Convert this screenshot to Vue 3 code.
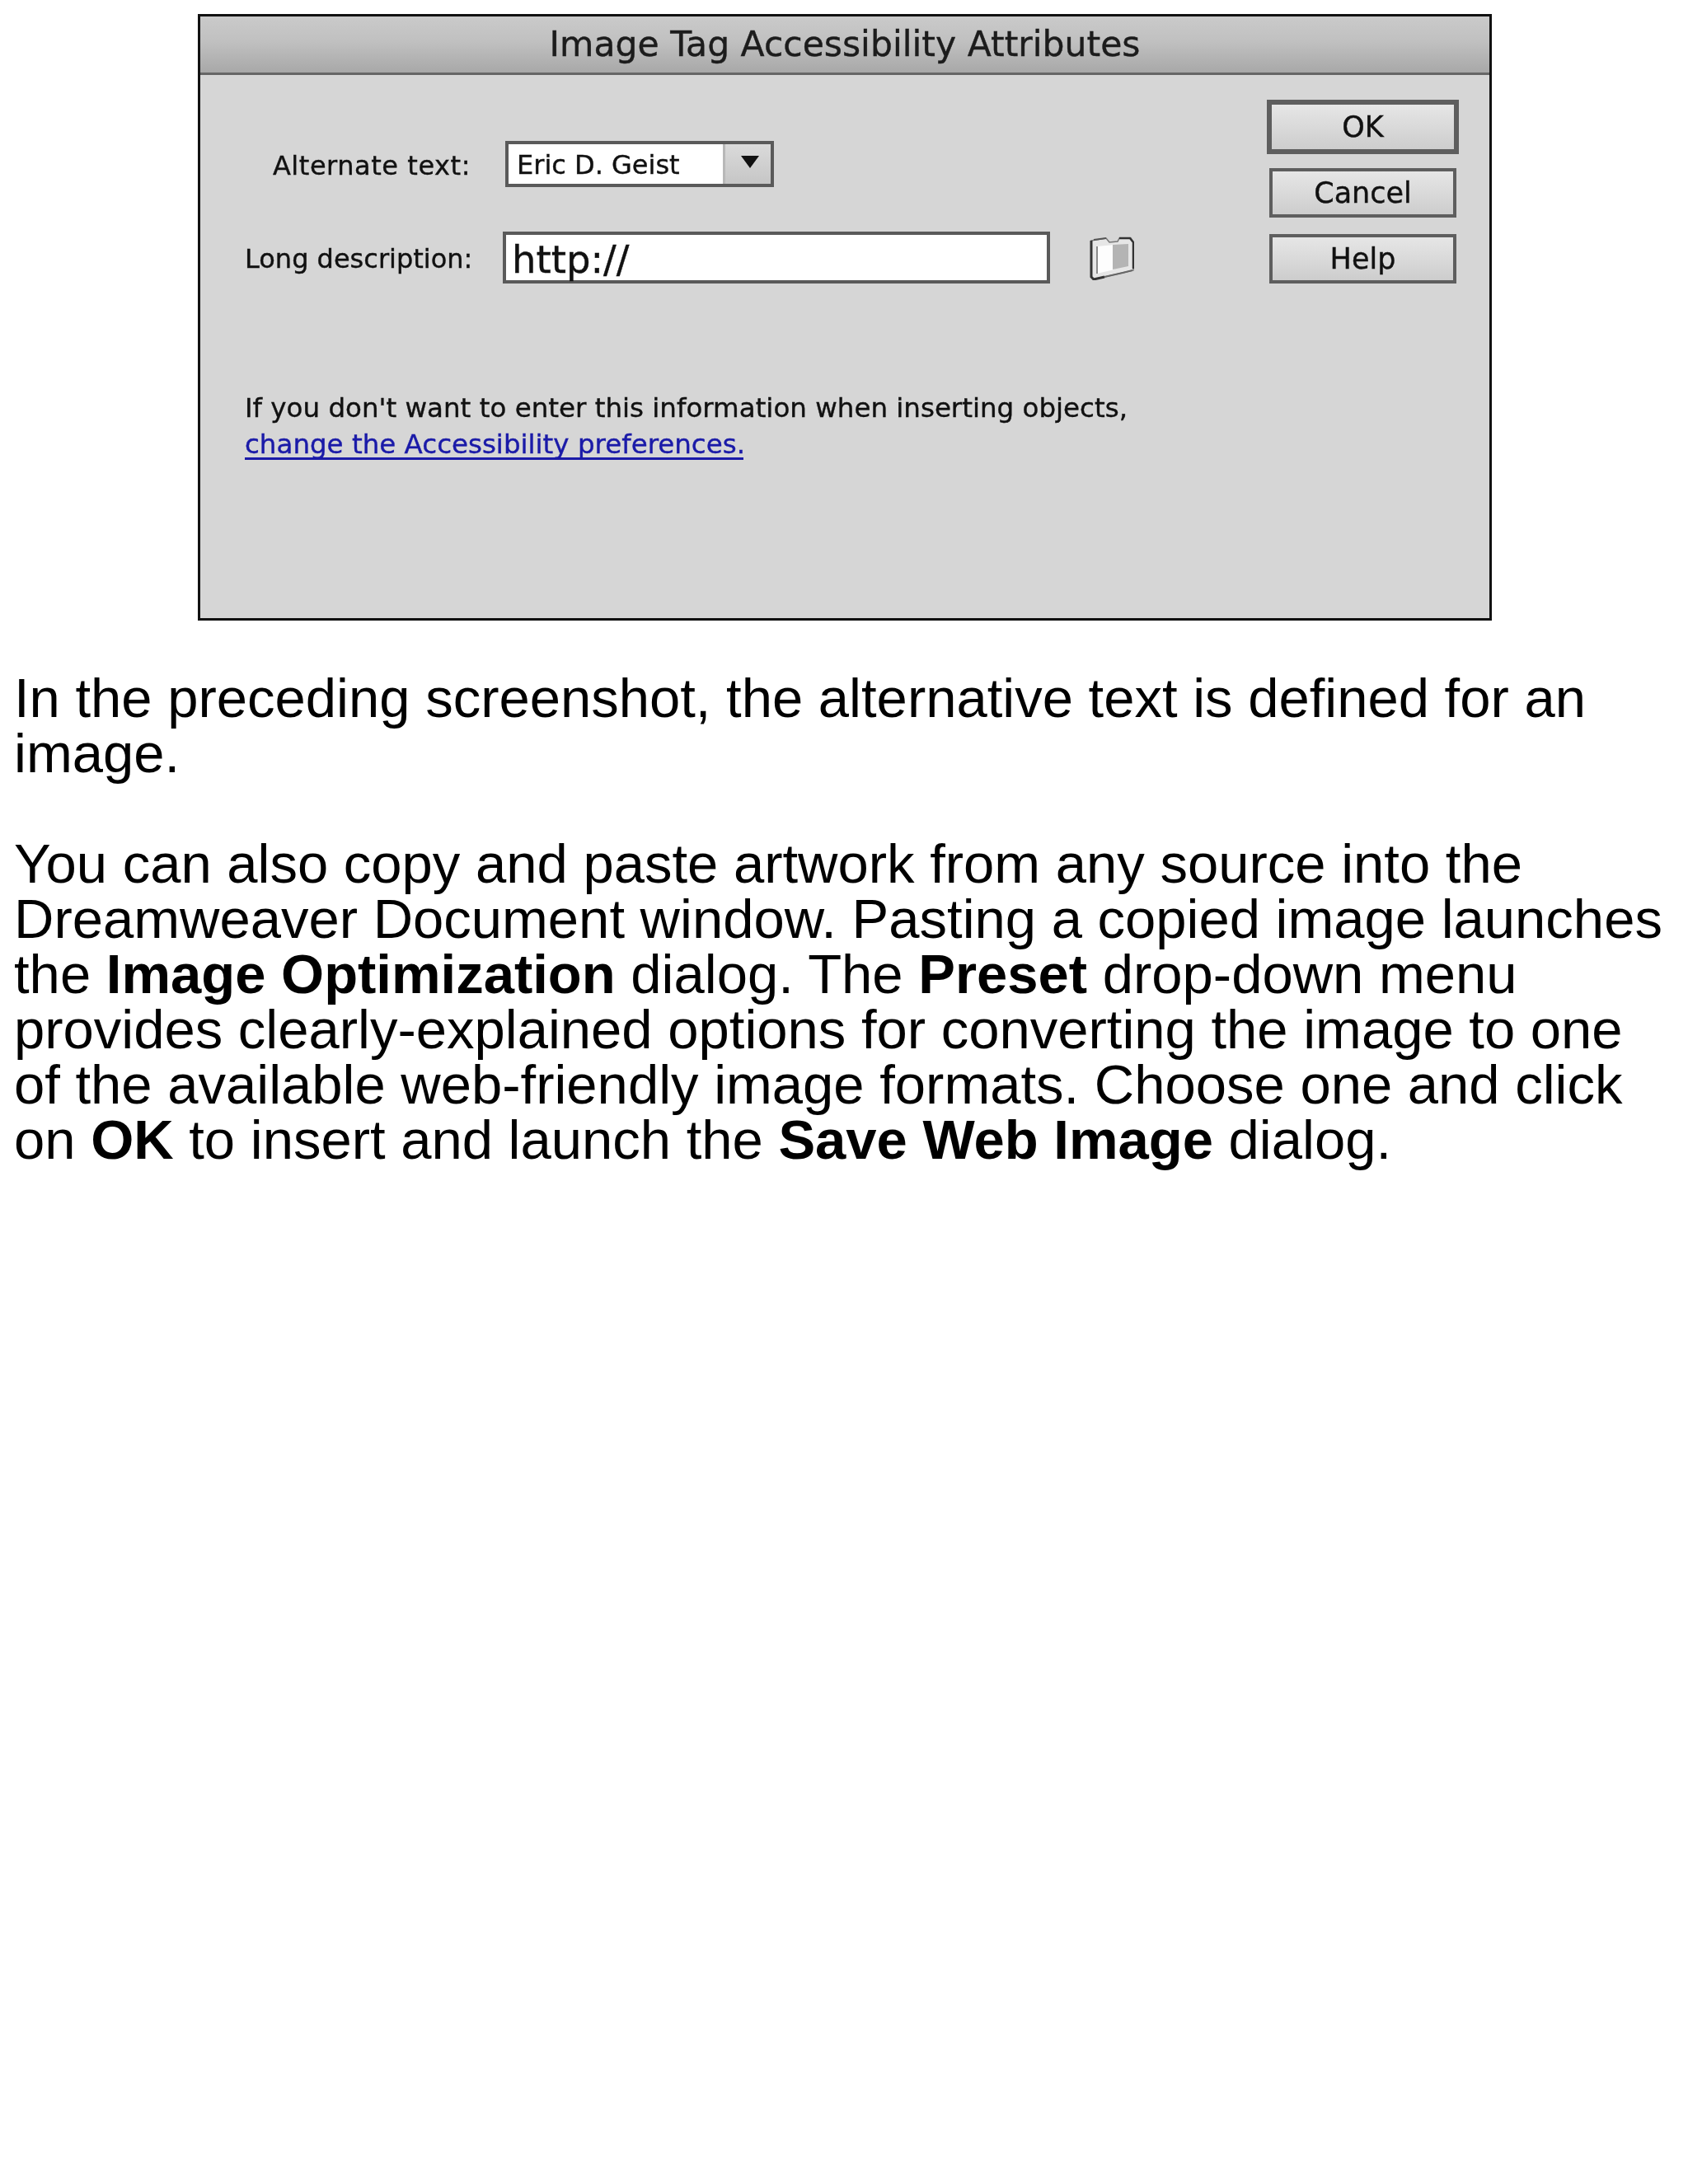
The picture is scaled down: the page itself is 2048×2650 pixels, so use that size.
<template>
  <div class="page">
    <div class="dialog">
      <div class="title-bar">Image Tag Accessibility Attributes</div>
      <div class="dialog-body">
        <div class="fields">
          <div class="field-row alt-row">
            <label class="field-label alt-label">Alternate text:</label>
            <div class="select-box">
              <span class="select-value">Eric D. Geist</span>
              <span class="select-arrow"><i class="triangle"></i></span>
            </div>
          </div>
          <div class="field-row desc-row">
            <label class="field-label">Long description:</label>
            <div class="url-input">http://</div>
            <svg class="folder" viewBox="0 0 54 54" width="54" height="54">
              <path d="M2 6 L20 3 L24 8 L34 7 L36 3 L50 3 L53 8 L53 42 L40 45 L5 53 L2 50 Z" fill="#e6e6e6" stroke="#777" stroke-width="1.5" />
              <path d="M9 13 L30 11 L30 41 L9 46 Z" fill="#fdfdfd" />
              <path d="M28 11 L47 10 L47 37 L28 41 Z" fill="#b4b4b4" />
              <path d="M2 6 L2 50 L5 53 L18 50" fill="none" stroke="#333" stroke-width="3" />
              <path d="M5 5 L20 3" fill="none" stroke="#555" stroke-width="2" />
              <path d="M36 3 L49 3 L53 8 L53 40" fill="none" stroke="#333" stroke-width="2.5" />
              <path d="M18 50 L40 45 L52 42" fill="none" stroke="#666" stroke-width="2" />
              <path d="M9 13 L9 46" fill="none" stroke="#8a8a8a" stroke-width="2" />
            </svg>
          </div>
          <div class="note">
            <div>If you don't want to enter this information when inserting objects,</div>
            <a class="note-link" href="#" @click.prevent>change the Accessibility preferences.</a>
          </div>
        </div>
        <div class="buttons">
          <button class="btn btn-default" type="button">OK</button>
          <button class="btn btn-cancel" type="button">Cancel</button>
          <button class="btn btn-help" type="button">Help</button>
        </div>
      </div>
    </div>

    <p class="para">In the preceding screenshot, the alternative text is defined for an image.</p>
    <p class="para">
      You can also copy and paste artwork from any source into the Dreamweaver Document window. Pasting a copied image launches
      the <b>Image Optimization</b> dialog. The <b>Preset</b> drop-down menu provides clearly-explained options for converting the image to one
      of the available web-friendly image formats. Choose one and click on <b>OK</b> to insert and launch the <b>Save Web Image</b> dialog.
    </p>
  </div>
</template>

<script setup>
</script>

<style>
html, body { background: #fff; }
</style>

<style scoped>
.page {
  box-sizing: border-box;
  width: 2048px;
  min-height: 2650px;
  padding: 17px 17px 0;
  background: #fff;
  font-family: "Liberation Sans", Arial, sans-serif;
  color: #000;
}

/* ダイアログ部分 */
.dialog {
  box-sizing: border-box;
  width: 1570px;
  height: 736px;
  margin-left: 223px;
  border: 3px solid #111;
  background: #d6d6d6;
  font-family: "DejaVu Sans", sans-serif;
  color: #111;
  -webkit-text-stroke: 0.4px currentColor;
  filter: blur(0.7px);
}
.title-bar {
  box-sizing: border-box;
  height: 71px;
  padding-top: 3px;
  border-bottom: 3px solid #666;
  background: linear-gradient(#cacaca, #c0c0c0 45%, #a8a8a8);
  text-align: center;
  font-size: 42.5px;
  line-height: 62px;
  white-space: nowrap;
  color: #1c1c1c;
}
.dialog-body {
  display: flex;
  padding: 30px 37px 0 54px;
}
.fields { flex: 1; }
.field-row {
  display: flex;
  align-items: center;
}
.alt-row { margin-top: 50px; height: 56px; }
.desc-row { margin-top: 54px; height: 63px; }
.field-label {
  width: 274px;
  margin-right: 39px;
  padding-top: 3px;
  flex-shrink: 0;
  text-align: right;
  font-size: 32px;
  white-space: nowrap;
}
.alt-label { letter-spacing: 0.55px; }

.select-box {
  box-sizing: border-box;
  display: flex;
  width: 326px;
  height: 56px;
  margin-left: 3px;
  border: 4px solid #5a5a5a;
  background: #fff;
}
.select-value {
  flex: 1;
  padding-left: 10px;
  font-size: 32px;
  line-height: 50px;
  white-space: nowrap;
}
.select-arrow {
  display: flex;
  width: 58px;
  padding-left: 4px;
  box-sizing: border-box;
  align-items: center;
  justify-content: center;
  border-left: 3px solid #b8b8b8;
  background: linear-gradient(#dadada, #c6c6c6);
}
.triangle {
  width: 0;
  height: 0;
  margin-bottom: 6px;
  border-left: 11px solid transparent;
  border-right: 11px solid transparent;
  border-top: 15px solid #111;
}

.url-input {
  box-sizing: border-box;
  width: 664px;
  height: 63px;
  padding-left: 7px;
  border: 4px solid #5a5a5a;
  background: #fff;
  font-size: 46.5px;
  line-height: 60px;
  white-space: nowrap;
}
.folder {
  margin-left: 48px;
  flex-shrink: 0;
}

.note {
  margin-top: 129px;
  font-size: 32.5px;
  line-height: 44px;
  white-space: nowrap;
}
.note-link {
  display: block;
  width: 605px;
  margin-top: 6px;
  color: #1a1aa8;
  text-decoration: none;
  border-bottom: 3px solid #1a1aa8;
  line-height: 32px;
}

.buttons {
  display: flex;
  flex-direction: column;
  align-items: center;
  width: 233px;
}
.btn {
  box-sizing: border-box;
  display: block;
  width: 227px;
  height: 60px;
  padding: 0;
  border: 4px solid #5e5e5e;
  background: linear-gradient(#e6e6e6, #cdcdcd);
  font-family: "DejaVu Sans", sans-serif;
  font-size: 35px;
  color: #111;
}
.btn-default {
  width: 233px;
  height: 66px;
  border-width: 6px;
}
.btn-cancel { margin-top: 17px; }
.btn-help { margin-top: 20px; }

/* 本文 */
.para {
  margin: 0 0 67px;
  font-size: 67px;
  line-height: 67px;
}
.dialog + .para { margin-top: 60px; }
</style>
